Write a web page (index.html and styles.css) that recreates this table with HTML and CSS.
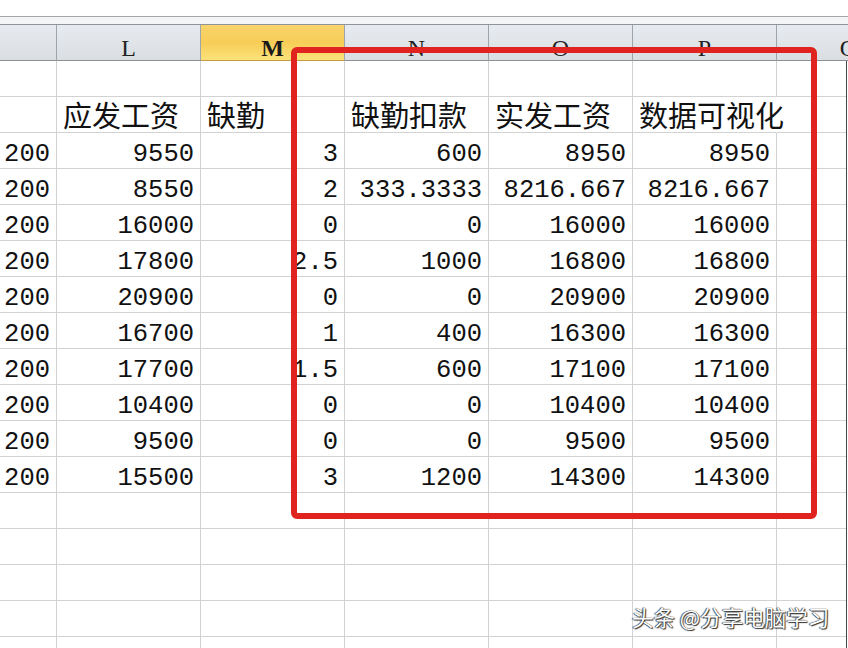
FILE: index.html
```html
<!DOCTYPE html>
<html lang="zh-CN">
<head>
<meta charset="utf-8">
<title>Sheet</title>
<link rel="stylesheet" href="styles.css">
</head>
<body>
<div class="page">
  <div class="topbar"></div>
  <div class="band"></div>
  <div class="colheads">
    <div class="ch"></div>
    <div class="ch">L</div>
    <div class="ch sel">M</div>
    <div class="ch">N</div>
    <div class="ch">O</div>
    <div class="ch">P</div>
    <div class="ch">Q</div>
  </div>
  <div class="body">
    <div class="grid">
      <div class="c"></div><div class="c"></div><div class="c"></div><div class="c"></div><div class="c"></div><div class="c"></div><div class="c"></div>

      <div class="c"></div><div class="c t">应发工资</div><div class="c t">缺勤</div><div class="c t">缺勤扣款</div><div class="c t">实发工资</div><div class="c t over">数据可视化</div><div class="c"></div>

      <div class="c n">200</div><div class="c n">9550</div><div class="c n">3</div><div class="c n">600</div><div class="c n">8950</div><div class="c n">8950</div><div class="c"></div>
      <div class="c n">200</div><div class="c n">8550</div><div class="c n">2</div><div class="c n">333.3333</div><div class="c n">8216.667</div><div class="c n">8216.667</div><div class="c"></div>
      <div class="c n">200</div><div class="c n">16000</div><div class="c n">0</div><div class="c n">0</div><div class="c n">16000</div><div class="c n">16000</div><div class="c"></div>
      <div class="c n">200</div><div class="c n">17800</div><div class="c n">2.5</div><div class="c n">1000</div><div class="c n">16800</div><div class="c n">16800</div><div class="c"></div>
      <div class="c n">200</div><div class="c n">20900</div><div class="c n">0</div><div class="c n">0</div><div class="c n">20900</div><div class="c n">20900</div><div class="c"></div>
      <div class="c n">200</div><div class="c n">16700</div><div class="c n">1</div><div class="c n">400</div><div class="c n">16300</div><div class="c n">16300</div><div class="c"></div>
      <div class="c n">200</div><div class="c n">17700</div><div class="c n">1.5</div><div class="c n">600</div><div class="c n">17100</div><div class="c n">17100</div><div class="c"></div>
      <div class="c n">200</div><div class="c n">10400</div><div class="c n">0</div><div class="c n">0</div><div class="c n">10400</div><div class="c n">10400</div><div class="c"></div>
      <div class="c n">200</div><div class="c n">9500</div><div class="c n">0</div><div class="c n">0</div><div class="c n">9500</div><div class="c n">9500</div><div class="c"></div>
      <div class="c n">200</div><div class="c n">15500</div><div class="c n">3</div><div class="c n">1200</div><div class="c n">14300</div><div class="c n">14300</div><div class="c"></div>

      <div class="c"></div><div class="c"></div><div class="c"></div><div class="c"></div><div class="c"></div><div class="c"></div><div class="c"></div>
      <div class="c"></div><div class="c"></div><div class="c"></div><div class="c"></div><div class="c"></div><div class="c"></div><div class="c"></div>
      <div class="c"></div><div class="c"></div><div class="c"></div><div class="c"></div><div class="c"></div><div class="c"></div><div class="c"></div>
      <div class="c"></div><div class="c"></div><div class="c"></div><div class="c"></div><div class="c"></div><div class="c"></div><div class="c"></div>
      <div class="c"></div><div class="c"></div><div class="c"></div><div class="c"></div><div class="c"></div><div class="c"></div><div class="c"></div>
    </div>
  </div>
  <div class="highlight"></div>
  <div class="watermark">头条 @分享电脑学习</div>
</div>
</body>
</html>
```

FILE: styles.css
```css
html, body {
  margin: 0;
  padding: 0;
  background: #ffffff;
}

.page {
  position: relative;
  width: 848px;
  height: 648px;
  overflow: hidden;
  background: #ffffff;
}

.topbar {
  height: 16px;
  background: #ffffff;
  border-bottom: 1px solid #a6a6a6;
}

.band {
  height: 7px;
  background: #f4f5f6;
}

.colheads {
  display: grid;
  grid-template-columns: 57px repeat(6, 144px);
  height: 37px;
  border-top: 1px solid #8e9399;
  box-sizing: border-box;
  width: 921px;
}

.ch {
  box-sizing: border-box;
  height: 36px;
  background: linear-gradient(#e7eaee, #dadee3);
  border-right: 1px solid #9ea4ab;
  border-bottom: 1px solid #8c9197;
  text-align: center;
  font-family: "Liberation Serif", "DejaVu Serif", serif;
  font-size: 24px;
  line-height: 24px;
  padding-top: 11px;
  color: #222222;
}

.ch.sel {
  background: linear-gradient(#f8d46c, #f7cd57 50%, #fbe27a);
  border-bottom-color: #c29a44;
  font-weight: bold;
  color: #1a1a1a;
}

.body {
  width: 846px;
  overflow: hidden;
  border-right: 1px solid #3f4a42;
}

.grid {
  display: grid;
  grid-template-columns: 57px repeat(6, 144px);
  grid-auto-rows: 36px;
  width: 921px;
}

.c {
  box-sizing: border-box;
  border-right: 1px solid #d2d2d2;
  border-bottom: 1px solid #d2d2d2;
  white-space: nowrap;
  overflow: visible;
  color: #111111;
}

.n {
  font-family: "Liberation Mono", "DejaVu Sans Mono", monospace;
  font-size: 25.5px;
  line-height: 28px;
  padding-top: 8px;
  padding-right: 6px;
  text-align: right;
}

.t {
  font-family: "Noto Sans CJK SC", "Noto Sans", sans-serif;
  font-size: 29px;
  line-height: 29px;
  padding-top: 3px;
  padding-left: 6px;
  text-align: left;
}

.t.over {
  border-right-color: transparent;
}

.highlight {
  position: absolute;
  left: 291px;
  top: 47px;
  width: 526px;
  height: 472px;
  box-sizing: border-box;
  border: 6px solid #e0231f;
  border-radius: 6px;
}

.watermark {
  position: absolute;
  left: 632px;
  top: 604px;
  font-family: "Noto Sans CJK SC", "Noto Sans", sans-serif;
  font-size: 21.5px;
  line-height: 26px;
  color: #ffffff;
  white-space: nowrap;
  text-shadow: 0 0 1px #222222, 1px 1px 1px #333333, -1px 0 1px #555555;
}
```
